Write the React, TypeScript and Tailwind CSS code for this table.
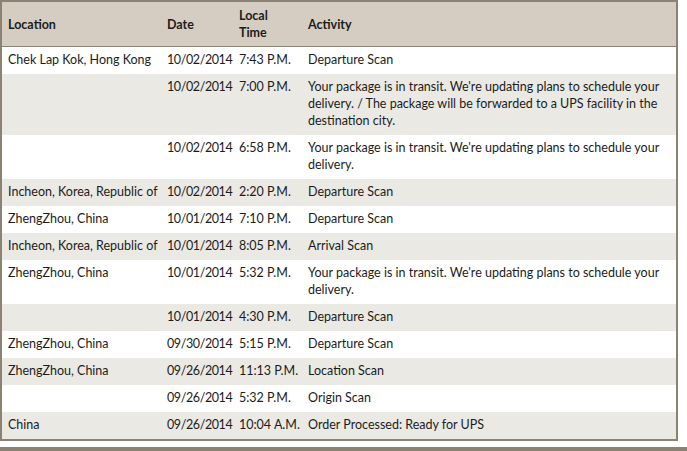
const rows: [string, string, string, string][] = [
  ['Chek Lap Kok, Hong Kong', '10/02/2014', '7:43 P.M.', 'Departure Scan'],
  ['', '10/02/2014', '7:00 P.M.', "Your package is in transit. We're updating plans to schedule your delivery. / The package will be forwarded to a UPS facility in the destination city."],
  ['', '10/02/2014', '6:58 P.M.', "Your package is in transit. We're updating plans to schedule your delivery."],
  ['Incheon, Korea, Republic of', '10/02/2014', '2:20 P.M.', 'Departure Scan'],
  ['ZhengZhou, China', '10/01/2014', '7:10 P.M.', 'Departure Scan'],
  ['Incheon, Korea, Republic of', '10/01/2014', '8:05 P.M.', 'Arrival Scan'],
  ['ZhengZhou, China', '10/01/2014', '5:32 P.M.', "Your package is in transit. We're updating plans to schedule your delivery."],
  ['', '10/01/2014', '4:30 P.M.', 'Departure Scan'],
  ['ZhengZhou, China', '09/30/2014', '5:15 P.M.', 'Departure Scan'],
  ['ZhengZhou, China', '09/26/2014', '11:13 P.M.', 'Location Scan'],
  ['', '09/26/2014', '5:32 P.M.', 'Origin Scan'],
  ['China', '09/26/2014', '10:04 A.M.', 'Order Processed: Ready for UPS'],
];

export default function App() {
  return (
    <div className="w-[687px] h-[451px] overflow-hidden bg-white font-['Lato',sans-serif] text-[12.5px] leading-[17px] text-[#1c1c1c]">
      <div className="w-[678px] border-2 border-[#8b8273]">
        <table className="w-full table-fixed border-collapse">
          <colgroup>
            <col className="w-[159px]" />
            <col className="w-[72px]" />
            <col className="w-[69px]" />
            <col />
          </colgroup>
          <thead>
            <tr className="bg-[#d5cdc1] border-b border-[#8b8273]">
              <th className="pl-[6px] pr-[2px] py-[5px] text-left align-middle font-bold">Location</th>
              <th className="pl-[6px] pr-[2px] py-[5px] text-left align-middle font-bold">Date</th>
              <th className="pl-[6px] pr-[2px] py-[5px] text-left align-middle font-bold">Local<br />Time</th>
              <th className="px-[6px] py-[5px] text-left align-middle font-bold">Activity</th>
            </tr>
          </thead>
          <tbody>
            {rows.map((r, i) => (
              <tr key={i} className={i % 2 === 0 ? 'bg-white' : 'bg-[#eae9e4]'}>
                <td className="pl-[6px] pr-[2px] pt-[4px] pb-[6px] align-top whitespace-nowrap">{r[0]}</td>
                <td className="pl-[6px] pr-[2px] pt-[4px] pb-[6px] align-top whitespace-nowrap tracking-[-0.4px]">{r[1]}</td>
                <td className="pl-[6px] pr-[2px] pt-[4px] pb-[6px] align-top whitespace-nowrap">{r[2]}</td>
                <td className="px-[6px] pt-[4px] pb-[6px] align-top">{r[3]}</td>
              </tr>
            ))}
          </tbody>
        </table>
      </div>
      <div className="mt-[6px] h-[10px] bg-[#8b8273]" />
    </div>
  );
}
